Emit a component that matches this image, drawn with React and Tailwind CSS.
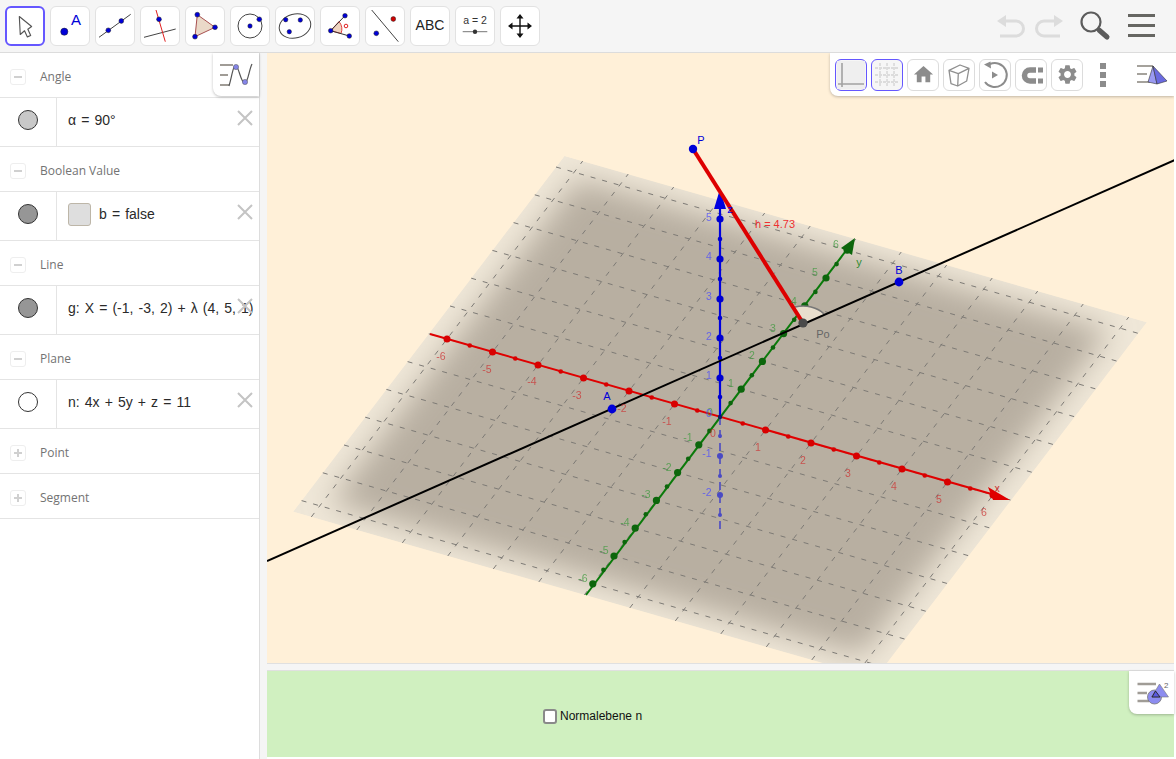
import { MdHome, MdSettings } from 'react-icons/md';

const BLUE = '#0000d8';

// plane coordinates to page pixels, the view is close enough to affine
const pt = (u, v) => [720 + 45.5 * u + 21.2 * v, 417 + 13 * u - 27.8 * v];
const poly = (s) => [pt(-s, s), pt(s, s), pt(s, -s), pt(-s, -s)].map((p) => p.join(',')).join(' ');
const UNITS = [-6, -5, -4, -3, -2, -1, 0, 1, 2, 3, 4, 5, 6];
const HALVES = [-5.5, -4.5, -3.5, -2.5, -1.5, -0.5, 0.5, 1.5, 2.5, 3.5, 4.5, 5.5];

const X_LABELS = [[-6, 441, 360], [-5, 487, 373], [-4, 532, 385], [-3, 577, 399], [-2, 622, 412], [-1, 667, 425], [0, 713, 437], [1, 758, 451], [2, 803, 464], [3, 848, 477], [4, 894, 490], [5, 939, 503], [6, 984, 516]];
const Y_LABELS = [[6, 836, 248], [5, 815, 276], [4, 794, 305], [3, 773, 332], [2, 752, 359], [1, 731, 387], [0, 710, 416], [-1, 688, 441], [-2, 667, 471], [-3, 646, 498], [-4, 625, 526], [-5, 604, 554], [-6, 583, 582]];
const Z_LABELS = [[5, 709, 221], [4, 709, 260], [3, 709, 300], [2, 709, 340], [1, 709, 379], [0, 709, 417], [-1, 707, 457], [-2, 707, 496]];

function Dot({ x, y, r = 2, fill = BLUE, stroke = '#222', sw = 0.5 }) {
  return <circle cx={x} cy={y} r={r} fill={fill} stroke={stroke} strokeWidth={sw} />;
}

function ToolIcon({ children }) {
  return <svg width="38" height="38" viewBox="1 1 38 38" className="block">{children}</svg>;
}

const TOOLS = [
  <ToolIcon key="move"><path d="M14 10 L15 29 L19.5 25 L22.5 31.5 L26 30 L23 23.5 L27 20.5 Z" fill="#fff" stroke="#555" strokeWidth="1.2" strokeLinejoin="round" /></ToolIcon>,
  <ToolIcon key="point"><Dot x={14.3} y={25.7} r={3.6} /><text x="26" y="19" textAnchor="middle" fontSize="15" fill={BLUE} fontFamily="Liberation Sans">A</text></ToolIcon>,
  <ToolIcon key="line"><line x1="4" y1="31.3" x2="35.7" y2="8.3" stroke="#444" /><Dot x={13.3} y={24.3} r={2.4} /><Dot x={26.3} y={15} r={2.4} /></ToolIcon>,
  <ToolIcon key="perp"><line x1="4" y1="31.3" x2="35.7" y2="23" stroke="#444" /><line x1="16" y1="4" x2="25.3" y2="35.7" stroke="#e02020" /><Dot x={19} y={13.3} r={2.4} /></ToolIcon>,
  <ToolIcon key="polygon"><polygon points="12.3,8.7 30,21.3 10,30.7" fill="#ead9c8" stroke="#a85050" /><Dot x={12.3} y={8.7} r={2.4} /><Dot x={30} y={21.3} r={2.4} /><Dot x={10} y={30.7} r={2.4} /></ToolIcon>,
  <ToolIcon key="circle"><circle cx="20" cy="20" r="12" fill="none" stroke="#444" /><Dot x={20} y={20} r={2.2} /><Dot x={29.3} y={13.3} r={2.4} /></ToolIcon>,
  <ToolIcon key="conic"><ellipse cx="20" cy="20" rx="16" ry="12" transform="rotate(-15 20 20)" fill="none" stroke="#444" /><Dot x={10.7} y={13.7} r={2.2} /><Dot x={14.3} y={25.7} r={2.2} /><Dot x={25.3} y={14} r={2.2} /></ToolIcon>,
  <ToolIcon key="angle"><path d="M10.7 24.7 L19 15.5 A12 12 0 0 1 21 27.5 Z" fill="#f0d4c0" stroke="#e04040" /><line x1="10.7" y1="24.7" x2="25" y2="9.7" stroke="#333" /><line x1="10.7" y1="24.7" x2="29.3" y2="30" stroke="#333" /><circle cx="26" cy="20" r="1.8" fill="none" stroke="#e02020" /><Dot x={10.7} y={24.7} r={2.3} /><Dot x={25} y={9.7} r={2.3} /><Dot x={29.3} y={30} r={2.3} /></ToolIcon>,
  <ToolIcon key="through"><line x1="6.7" y1="4" x2="33.3" y2="35.7" stroke="#444" /><Dot x={11.3} y={27.3} r={2.4} /><Dot x={28.3} y={13} r={2.4} fill="#d00000" /></ToolIcon>,
  <span key="abc" className="text-[14px] text-[#222] font-['Liberation_Sans',sans-serif]">ABC</span>,
  <ToolIcon key="slider"><text x="20" y="18" textAnchor="middle" fontSize="10.5" fill="#333" fontFamily="Liberation Sans">a = 2</text><line x1="7.7" y1="25.7" x2="32.3" y2="25.7" stroke="#777" /><circle cx="20" cy="25.7" r="2.2" fill="#333" /></ToolIcon>,
  <ToolIcon key="pan"><path d="M20 10 V30 M10 20 H30" stroke="#111" strokeWidth="1.4" /><path d="M20 8 L16.5 12.5 H23.5 Z M20 32 L16.5 27.5 H23.5 Z M8 20 L12.5 16.5 V23.5 Z M32 20 L27.5 16.5 V23.5 Z" fill="#111" /></ToolIcon>,
];

function StyleButton({ active, children }) {
  return (
    <div className={`w-8 h-8 rounded-[6px] border flex items-center justify-center ${active ? 'border-[#6557ff] bg-[#f6f6f6]' : 'border-[#dcdcdc] bg-white'}`}>
      {children}
    </div>
  );
}

function GraphicsStyleBar() {
  return (
    <div className="absolute top-0 right-0 w-[344px] h-[43px] bg-white rounded-bl-[8px] shadow-[0_1px_3px_rgba(0,0,0,0.25)] flex items-center pl-[5px] gap-1">
      <StyleButton active>
        <svg width="30" height="30" viewBox="0 0 30 30"><rect x="1" y="1" width="28" height="28" fill="#efefef" /><path d="M6 3 V27 M2 24 H28" stroke="#a2a2a2" strokeWidth="1.6" /></svg>
      </StyleButton>
      <StyleButton active>
        <svg width="30" height="30" viewBox="0 0 30 30"><path d="M8 3 V27 M15 3 V27 M22 3 V27 M3 8 H27 M3 15 H27 M3 22 H27" stroke="#dcdcdc" strokeWidth="1.8" strokeDasharray="3 1" /></svg>
      </StyleButton>
      <StyleButton><MdHome size={23} color="#8c8c8c" /></StyleButton>
      <StyleButton>
        <svg width="30" height="30" viewBox="1 1 30 30" fill="none" stroke="#8f8f8f" strokeWidth="1.3" strokeLinejoin="round"><path d="M6 11.3 L17 6 L26 9.3 L23.7 22 L14.7 27 L8 24.7 Z M6 11.3 L15.3 14.7 L26 9.3 M15.3 14.7 L14.7 27" /></svg>
      </StyleButton>
      <StyleButton>
        <svg width="30" height="30" viewBox="1 1 30 30" fill="none"><path d="M11 5 A12 12 0 1 1 6 23" stroke="#8c8c8c" strokeWidth="2" /><path d="M5 5.5 L11.5 2.5 L12 9.5 Z" fill="#8c8c8c" /><path d="M13 12.5 L19 16 L13 19.5 Z" fill="#8c8c8c" /></svg>
      </StyleButton>
      <StyleButton>
        <svg width="26" height="26" viewBox="0 0 26 26" fill="none"><path d="M18 8 H12 A5.5 5.5 0 0 0 12 19 H18" stroke="#8c8c8c" strokeWidth="5.5" /><path d="M20 5.5 H25 V10.5 H20 Z M20 16.5 H25 V21.5 H20 Z" fill="#8c8c8c" /></svg>
      </StyleButton>
      <StyleButton><MdSettings size={23} color="#8c8c8c" /></StyleButton>
      <div className="w-[6px] ml-[13px] flex flex-col gap-[3px]">
        <div className="h-[6px] bg-[#8c8c8c]" />
        <div className="h-[6px] bg-[#8c8c8c]" />
        <div className="h-[6px] bg-[#8c8c8c]" />
      </div>
      <svg width="34" height="30" viewBox="0 0 34 30" className="ml-[27px] shrink-0">
        <path d="M0 6 H16 M0 14 H10 M0 22 H13" stroke="#a5a29c" strokeWidth="2" />
        <polygon points="16,6 11,22 20,24" fill="#9a9af2" stroke="#333" strokeWidth="0.6" />
        <polygon points="16,6 20,24 30,21" fill="#6a6ae0" stroke="#333" strokeWidth="0.6" />
      </svg>
    </div>
  );
}

function Scene() {
  return (
    <svg viewBox="267 53 907 610" width="907" height="610" className="block" fontFamily="Liberation Sans">
      <defs>
        <clipPath id="plane-clip"><polygon points={poly(6.4)} /></clipPath>
        <filter id="soft-edge" x="-20%" y="-20%" width="140%" height="140%"><feGaussianBlur stdDeviation="15" /></filter>
      </defs>

      {/* plane with faded rim */}
      <g clipPath="url(#plane-clip)">
        <polygon points={poly(6.4)} fill="#efe7d8" />
        <polygon points={poly(5.85)} fill="#b8afa1" filter="url(#soft-edge)" />
      </g>

      {/* grid */}
      <g stroke="#7d7a75" strokeWidth="1" strokeDasharray="5 7" fill="none">
        {UNITS.map((n) => {
          const [a, b] = [pt(n, -6.4), pt(n, 6.4)];
          const [c, d] = [pt(-6.4, n), pt(6.4, n)];
          return (
            <g key={n}>
              <line x1={a[0]} y1={a[1]} x2={b[0]} y2={b[1]} />
              <line x1={c[0]} y1={c[1]} x2={d[0]} y2={d[1]} />
            </g>
          );
        })}
      </g>

      {/* x axis */}
      <line x1="430" y1="334" x2="995" y2="495" stroke="#e00000" strokeWidth="2" />
      {UNITS.filter((n) => n !== 0).map((n) => <circle key={n} cx={pt(n, 0)[0]} cy={pt(n, 0)[1]} r="3.5" fill="#d80000" />)}
      {HALVES.map((n) => <circle key={n} cx={pt(n, 0)[0]} cy={pt(n, 0)[1]} r="2.3" fill="#d80000" />)}
      <polygon points="1010,500 988,487 993,500" fill="#e00000" />

      {/* y axis */}
      <line x1="586" y1="595" x2="848" y2="248" stroke="#0a7a0a" strokeWidth="2" />
      {UNITS.filter((n) => n !== 0).map((n) => <circle key={n} cx={pt(0, n)[0]} cy={pt(0, n)[1]} r="3.6" fill="#0c660c" />)}
      {HALVES.map((n) => <circle key={n} cx={pt(0, n)[0]} cy={pt(0, n)[1]} r="2.3" fill="#0c660c" />)}
      <polygon points="855,238 841,248 852,255" fill="#0c660c" />

      {/* z axis */}
      <line x1="720" y1="417" x2="720" y2="530" stroke="#4a4ac4" strokeWidth="1.6" strokeDasharray="8 5" />
      {[456, 495].map((y) => <circle key={y} cx="720" cy={y} r="3" fill="#4a4ac4" />)}
      {[436, 476, 515].map((y) => <circle key={y} cx="720" cy={y} r="2" fill="#4a4ac4" />)}
      <line x1="720" y1="417" x2="720" y2="205" stroke="#0000e0" strokeWidth="2.2" />
      {[219, 259, 299, 338, 378].map((y) => <circle key={y} cx="720" cy={y} r="3.6" fill="#0000d0" />)}
      {[239, 279, 318, 358, 397].map((y) => <circle key={y} cx="720" cy={y} r="2.3" fill="#0000d0" />)}
      <polygon points="720,189 714,209 726,209" fill="#0000e0" />
      <circle cx="720" cy="417" r="2.2" fill="#102060" />

      {/* line g and right angle wedge */}
      <path d="M803 323 L795 307 A25 18 0 0 1 824 314 Z" fill="#e8decd" />
      <path d="M795 307 A25 18 0 0 1 824 314" fill="none" stroke="#777" strokeWidth="1.6" />
      <line x1="267" y1="561" x2="1175" y2="160" stroke="#000" strokeWidth="2" />
      <line x1="693" y1="149" x2="803" y2="323" stroke="#dd0000" strokeWidth="4" />
      <circle cx="693" cy="149" r="4.2" fill={BLUE} />
      <circle cx="803" cy="323" r="4.6" fill="#4a4a4a" />
      <circle cx="612" cy="409" r="4.4" fill={BLUE} />
      <circle cx="899" cy="282" r="4.4" fill={BLUE} />

      {/* labels */}
      <g fontSize="10.5" opacity="0.75">
        {X_LABELS.map(([n, x, y]) => <text key={n} x={x} y={y} textAnchor="middle" fill="#cc3333">{n}</text>)}
        {Y_LABELS.map(([n, x, y]) => <text key={n} x={x} y={y} textAnchor="middle" fill="#3f9a3f">{n}</text>)}
        {Z_LABELS.map(([n, x, y]) => <text key={n} x={x} y={y} textAnchor="middle" fill="#4a4aff">{n}</text>)}
      </g>
      <text x="997" y="492" fontSize="10.5" fill="#cc3333" textAnchor="middle">x</text>
      <text x="859" y="266" fontSize="11" fill="#2f8a2f" textAnchor="middle">y</text>
      <text x="730" y="213" fontSize="11" fill="#0000e0" textAnchor="middle">z</text>
      <text x="701" y="144" fontSize="11" fill={BLUE} textAnchor="middle">P</text>
      <text x="607" y="400" fontSize="11" fill={BLUE} textAnchor="middle">A</text>
      <text x="899" y="274" fontSize="11" fill={BLUE} textAnchor="middle">B</text>
      <text x="823" y="338" fontSize="11" fill="#666" textAnchor="middle">Po</text>
      <text x="775" y="228" fontSize="11" fill="#ee3030" textAnchor="middle">h = 4.73</text>
    </svg>
  );
}

function GroupHeader({ label, open }) {
  return (
    <div className="h-[45px] border-b border-[#e4e4e4] flex items-center pl-[10px] pt-[4px]">
      <div className="w-4 h-4 rounded-[3px] border border-[#eeeeee] relative flex items-center justify-center">
        <div className="w-2 h-[2px] bg-[#d0d0d0]" />
        {!open && <div className="absolute w-[2px] h-2 bg-[#d0d0d0]" />}
      </div>
      <span className="ml-[14px] text-[12px] text-[#737373]">{label}</span>
    </div>
  );
}

function ValueRow({ marble, children }) {
  return (
    <div className="h-[49px] border-b border-[#e4e4e4] flex relative">
      <div className="w-[57px] border-r border-[#e4e4e4] flex items-center justify-center pb-[4px]">
        <div className="w-5 h-5 rounded-full border border-[#333]" style={{ backgroundColor: marble }} />
      </div>
      <div className="flex-1 pl-[11px] pb-[4px] flex items-center text-[14px] text-[#2a2a2a] whitespace-nowrap [word-spacing:1.2px] font-['Liberation_Sans',sans-serif]">
        {children}
      </div>
      <svg width="16" height="16" viewBox="0 0 16 16" className="absolute right-[6px] top-[12px]">
        <path d="M1 1 L15 15 M15 1 L1 15" stroke="#c4c4c4" strokeWidth="2" />
      </svg>
    </div>
  );
}

function AlgebraPanel() {
  return (
    <div className="w-[260px] shrink-0 border-r border-[#dddddd] bg-white relative">
      <GroupHeader label="Angle" open />
      <ValueRow marble="#c8c8c8">α = 90°</ValueRow>
      <GroupHeader label="Boolean Value" open />
      <ValueRow marble="#969696">
        <div className="w-[23px] h-[23px] mr-2 rounded-[3px] border border-[#bdb6a8] bg-[#dedede]" />
        b = false
      </ValueRow>
      <GroupHeader label="Line" open />
      <ValueRow marble="#969696">g: X = (-1, -3, 2) + λ (4, 5, 1)</ValueRow>
      <GroupHeader label="Plane" open />
      <ValueRow marble="#ffffff">n: 4x + 5y + z = 11</ValueRow>
      <GroupHeader label="Point" />
      <GroupHeader label="Segment" />

      <div className="absolute top-0 right-0 w-[46px] h-[43px] bg-white rounded-bl-[8px] shadow-[0_1px_3px_rgba(0,0,0,0.25)] flex items-center justify-center">
        <svg width="34" height="26" viewBox="0 0 34 26">
          <path d="M1 3 H14 M1 13 H9 M1 23 H10" stroke="#a09c96" strokeWidth="2.2" />
          <path d="M10 24 C13 14 14 3 17 4 C20 5 22 22 26 21 C29 20 30 8 33 2" fill="none" stroke="#555" strokeWidth="1.2" />
          <circle cx="17" cy="5" r="2.6" fill="#8484e8" stroke="#555" strokeWidth="0.5" />
          <circle cx="26" cy="20" r="2.6" fill="#8484e8" stroke="#555" strokeWidth="0.5" />
        </svg>
      </div>
    </div>
  );
}

export default function App() {
  return (
    <div className="w-[1176px] h-[759px] overflow-hidden bg-white flex flex-col font-['Open_Sans',sans-serif]">
      {/* toolbar */}
      <div className="h-[53px] shrink-0 bg-[#f5f5f5] border-b border-[#dcdcdc] flex items-center pl-[5px] pb-[1px]">
        <div className="flex gap-[5px]">
          {TOOLS.map((tool, i) => (
            <div key={tool.key} className={`w-10 h-10 bg-white rounded-[6px] flex items-center justify-center border ${i === 0 ? 'border-2 border-[#6557ff]' : 'border-[#e2e2e2]'}`}>
              {tool}
            </div>
          ))}
        </div>
        <svg width="66" height="26" viewBox="0 0 66 26" fill="none" className="ml-[457px]">
          <path d="M9 8 H19 A7.5 7.5 0 0 1 19 23 H3 M57 8 H47 A7.5 7.5 0 0 0 47 23 H63" stroke="#dcdcdc" strokeWidth="3" />
          <path d="M0 8 L9 2 V14 Z M66 8 L57 2 V14 Z" fill="#dcdcdc" />
        </svg>
        <svg width="32" height="30" viewBox="0 0 32 30" fill="none" className="ml-[16px]">
          <circle cx="12" cy="11" r="9.5" stroke="#5c5c5c" strokeWidth="2.2" />
          <path d="M20 19 L28 26" stroke="#5c5c5c" strokeWidth="5" strokeLinecap="round" />
        </svg>
        <div className="ml-[17px] w-[27px] flex flex-col gap-[7px]">
          <div className="h-[3px] bg-[#666662]" />
          <div className="h-[3px] bg-[#666662]" />
          <div className="h-[3px] bg-[#666662]" />
        </div>
      </div>

      <div className="flex-1 flex min-h-0">
        <AlgebraPanel />
        <div className="w-[7px] shrink-0 bg-[#f5f5f5]" />
        <div className="w-[907px] shrink-0 pb-[2px] flex flex-col">
          <div className="h-[610px] shrink-0 bg-[#fff0d8] relative overflow-hidden">
            <Scene />
            <GraphicsStyleBar />
          </div>
          <div className="h-[8px] shrink-0 bg-[#f5f5f5] border-t border-b border-[#e0e0e0]" />
          <div className="flex-1 bg-[#d0f0c0] relative flex items-start pl-[276px] pt-[38px]">
            <div className="w-[14px] h-[15px] rounded-[3px] border-2 border-[#8a8a8a] bg-white" />
            <span className="ml-[3px] text-[12px] leading-[15px] text-[#111] font-['Liberation_Sans',sans-serif]">Normalebene n</span>
            <div className="absolute top-0 right-0 w-[45px] h-[43px] bg-white rounded-bl-[8px] shadow-[0_1px_3px_rgba(0,0,0,0.25)] flex items-center justify-center">
              <svg width="34" height="26" viewBox="0 0 34 26" className="overflow-visible">
                <path d="M2.5 4 H21 M2.5 13 H12 M2.5 21 H14" stroke="#a09c96" strokeWidth="2.4" />
                <circle cx="19.5" cy="17" r="7" fill="#8c8cf0" stroke="#777" strokeWidth="0.8" />
                <polygon points="24.5,4 16.5,17 33.5,17" fill="#8c8cf0" stroke="#777" strokeWidth="0.6" />
                <polygon points="20.5,11 17,17 25,17" fill="#5a5ae0" stroke="#222" strokeWidth="0.9" />
                <text x="29" y="8" fontSize="8" fill="#666" fontFamily="Liberation Sans">2</text>
              </svg>
            </div>
          </div>
        </div>
      </div>
    </div>
  );
}
